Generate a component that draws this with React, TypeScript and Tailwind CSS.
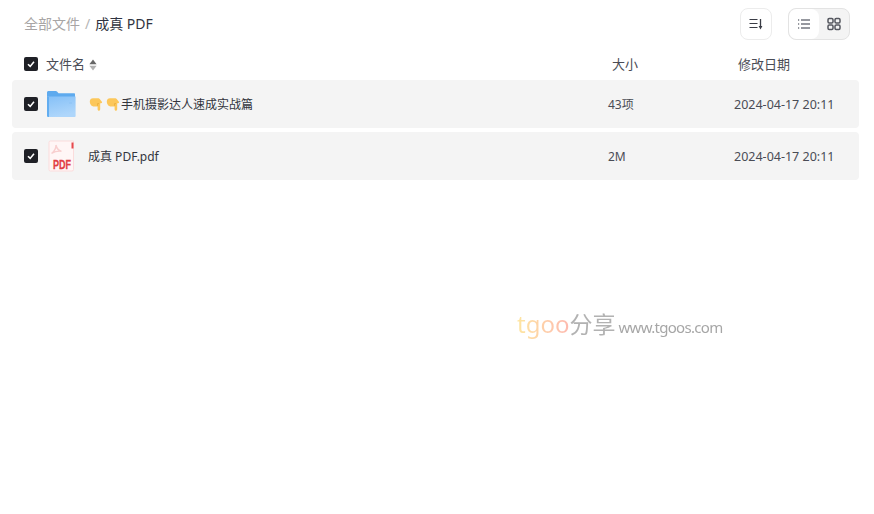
const font = { fontFamily: '"Noto Sans", "Noto Sans CJK SC", sans-serif' };

const Check = () => (
  <span className="flex h-[14px] w-[14px] shrink-0 items-center justify-center rounded-[2px] bg-[#1f2026]">
    <svg width="10" height="10" viewBox="0 0 10 10" fill="none">
      <path d="M2 5.2 4.2 7.4 8 2.8" stroke="#fff" strokeWidth="1.6" />
    </svg>
  </span>
);

const Hand = () => (
  <svg width="14" height="14" viewBox="0 0 14 14">
    <path d="M.8 4.500C.8 2.400 2.200 1.200 4 1.200h4.800c1 0 1.800.5 2.300 1.200l1.800 2.400c.5.700 0 1.500-.8 1.500h-.9v5.900c0 .9-.6 1.500-1.300 1.500s-1.300-.6-1.300-1.500V9.500H5C2.600 9.500.8 7.200.8 4.500Z" fill="#fcc75a" />
    <path d="M8.600 8.800V6.600h1.400" fill="none" stroke="#e9ab3a" strokeWidth=".8" />
  </svg>
);

const FolderIcon = () => (
  <svg width="30" height="28" viewBox="0 0 30 28">
    <defs>
      <linearGradient id="folderFront" x1="0" y1="0" x2="0.3" y2="1">
        <stop offset="0" stopColor="#85c0f7" />
        <stop offset="1" stopColor="#aed6fb" />
      </linearGradient>
    </defs>
    <path d="M1 2.500C1 1.600 1.600 1 2.500 1h7.300c.5 0 .9.200 1.200.6l1.500 1.700H28c.6 0 1 .4 1 1V8H1Z" fill="#5eaaee" />
    <path d="M1 6.500h28.600V26a1 1 0 0 1-1 1H2.500A1.500 1.500 0 0 1 1 25.500Z" fill="url(#folderFront)" />
    <path d="M1 6.500V25.500A1.500 1.500 0 0 0 2.500 27H3V7Z" fill="#62adf0" />
    <path d="M23 12.500h3v1h-3Z" fill="#8cc2f5" />
  </svg>
);

const PdfIcon = () => (
  <svg width="27" height="32" viewBox="0 0 27 32">
    <path d="M2.500 1H25.500v28.500a1.500 1.500 0 0 1-1.500 1.500H2.500A1.500 1.500 0 0 1 1 29.500v-27A1.500 1.500 0 0 1 2.500 1Z" fill="#fff6f6" stroke="#fbdcdc" />
    <path d="M23.500 2.500h2v6h-2Z" fill="#e5484d" />
    <path d="M8 5c.6 3 2.600 5.500 5.500 6.300M8 5c0 3.500-1.700 6.500-4.500 8.500M3.500 13.500c3-1.800 6.500-2.700 10-2.200" fill="none" stroke="#f8cfcf" strokeWidth="1.400" />
    <text transform="translate(14 28.500) scale(.86 1.250)" textAnchor="middle" fontSize="10.500" fontWeight="700" fill="#e23d44" stroke="#e23d44" strokeWidth=".25" fontFamily="Liberation Sans, sans-serif">PDF</text>
  </svg>
);

const rows = [
  { id: 1, name: "手机摄影达人速成实战篇", size: "43项", date: "2024-04-17 20:11", folder: true },
  { id: 2, name: "成真 PDF.pdf", size: "2M", date: "2024-04-17 20:11", folder: false },
];

export default function App() {
  return (
    <div className="relative h-[514px] w-[874px] overflow-hidden bg-white pl-3 pr-[15px]" style={font}>
      <div className="flex h-12 items-center pr-[9px]">
        <div className="flex flex-1 items-center pb-px pl-3 text-[14px] text-[#a8a5a5]">
          <span>全部文件</span>
          <span className="mx-[5px] text-[#b5b5b5]">/</span>
          <span className="text-[#2f3340]">成真 PDF</span>
        </div>
        <button className="flex h-8 w-8 items-center justify-center rounded-lg border border-[#ececec] bg-white">
          <svg width="16" height="16" viewBox="0 0 16 16" fill="none" stroke="#3a3c45" strokeWidth="1.200">
            <path d="M1.500 3.500h8M1.500 7.500h8M1.500 11.500h8" />
            <path d="M12.500 3v7.500" strokeWidth="1.300" />
            <path d="M10.600 10h3.800l-1.900 3.500Z" fill="#3a3c45" stroke="none" />
          </svg>
        </button>
        <div className="ml-4 flex h-8 w-[62px] overflow-hidden rounded-lg border border-[#e3e3e3] bg-[#f4f4f4]">
          <span className="flex w-[30px] items-center justify-center rounded-lg bg-white">
            <svg width="14" height="14" viewBox="0 0 14 14" fill="none" stroke="#2f3340" strokeWidth="1.100">
              <path d="M4 3h9M4 7h9M4 11h9M1 3h1.200M1 7h1.200M1 11h1.200" />
            </svg>
          </span>
          <span className="flex flex-1 items-center justify-center">
            <svg width="14" height="14" viewBox="0 0 14 14" fill="none" stroke="#55575f" strokeWidth="1.500">
              <rect x="1" y="1.500" width="5" height="4.500" rx="1.200" />
              <rect x="8" y="1.500" width="5" height="4.500" rx="1.200" />
              <rect x="1" y="8" width="5" height="4.500" rx="1.200" />
              <rect x="8" y="8" width="5" height="4.500" rx="1.200" />
            </svg>
          </span>
        </div>
      </div>

      <div className="flex h-8 items-center pl-3 text-[13px] text-[#4a4c55]">
        <Check />
        <div className="ml-2 flex flex-1 items-center pt-px">
          文件名
          <svg className="ml-1" width="8" height="12" viewBox="0 0 8 12">
            <path d="M4 .5 7.600 5.300H.4Z" fill="#666" />
            <path d="M4 11.500 7.600 6.700H.4Z" fill="#b0b0b0" />
          </svg>
        </div>
        <div className="w-[126px] pl-1 pt-px">大小</div>
        <div className="w-[125px] pl-1 pt-px">修改日期</div>
      </div>

      <div className="flex flex-col gap-1">
        {rows.map((row) => (
          <div key={row.id} className="flex h-12 items-center rounded-[4px] bg-[#f4f4f4] pl-3 text-[12px] text-[#4a4c55]">
            <Check />
            <div className="flex flex-1 items-center">
              {row.folder ? (
                <>
                  <span className="ml-2 flex"><FolderIcon /></span>
                  <span className="ml-[13px] flex items-center gap-[3px]"><Hand /><Hand /></span>
                  <span className="ml-[1px] pt-px text-[#33353d]">{row.name}</span>
                </>
              ) : (
                <>
                  <span className="ml-[10px] flex"><PdfIcon /></span>
                  <span className="ml-[13px] pt-px text-[#33353d]">{row.name}</span>
                </>
              )}
            </div>
            <div className="w-[126px] pt-px">{row.size}</div>
            <div className="w-[125px] pt-[2px] text-[12.5px]">{row.date}</div>
          </div>
        ))}
      </div>

      <div className="absolute left-[517px] top-[306px] flex items-baseline opacity-80">
        <span className="bg-gradient-to-r from-[#fde08a] to-[#fda99c] bg-clip-text text-[24px] text-transparent">tgoo</span>
        <span className="text-[23px] text-[#a0a0a0]">分享</span>
        <span className="ml-[3px] text-[15px] tracking-[-0.7px] text-[#909090]">www.tgoos.com</span>
      </div>
    </div>
  );
}
